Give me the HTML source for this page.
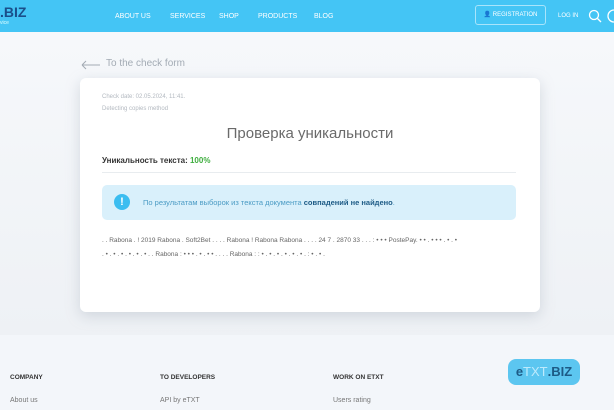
<!DOCTYPE html><html><head><style>
body{margin:0;width:614px;height:410px;overflow:hidden;background:#f3f6fa;font-family:"Liberation Sans","Noto Sans CJK SC",sans-serif;position:relative}
.hd{position:absolute;left:0;top:0;width:614px;height:32px;background:#44c5f5}
.a{position:absolute;color:#fff;font-size:7px;top:13px}
.band{position:absolute;left:0;top:32px;width:614px;height:303px;background:linear-gradient(#f6f8fb,#eef1f5)}
.card{position:absolute;left:80px;top:78px;width:460px;height:234px;background:#fff;border-radius:6px;box-shadow:0 4px 14px rgba(150,160,175,.35)}
.t{position:absolute;white-space:nowrap}
</style></head><body>
<div class="hd">
<div class="t" style="left:0;top:4px;color:#1a4f8a;font-weight:bold;font-size:14px">.BIZ</div>
<div class="t" style="left:0;top:20px;color:#dff;font-size:5px">vice</div>
<span class="a" style="left:115px">ABOUT US</span><span class="a" style="left:170px">SERVICES</span><span class="a" style="left:219px">SHOP</span><span class="a" style="left:258px">PRODUCTS</span><span class="a" style="left:314px">BLOG</span>
<div style="position:absolute;left:475px;top:5px;width:71px;height:20px;border:1px solid #a8e4fb;border-radius:3px;box-sizing:border-box;color:#fff;font-size:6px;line-height:18px;text-align:center">👤 REGISTRATION</div>
<span class="a" style="left:558px;font-size:6px">LOG IN</span>
<svg style="position:absolute;left:588px;top:9px" width="14" height="14"><circle cx="6" cy="6" r="4.5" fill="none" stroke="#fff" stroke-width="1.3"/><path d="M9.5 9.5L13 13" stroke="#fff" stroke-width="1.3"/></svg>
<svg style="position:absolute;left:606px;top:8px" width="10" height="16"><circle cx="8" cy="8" r="6" fill="none" stroke="#fff" stroke-width="1.3"/></svg>
</div>
<div class="band"></div>
<svg style="position:absolute;left:81px;top:60px" width="20" height="10"><path d="M1 5H19M1 5L5 1M1 5L5 9" fill="none" stroke="#a3abb4" stroke-width="1"/></svg>
<div class="t" style="left:106px;top:58px;color:#a3abb4;font-size:10px">To the check form</div>
<div class="card">
<div class="t" style="left:22px;top:16px;color:#b3b9c0;font-size:6px">Check date: 02.05.2024, 11:41.</div>
<div class="t" style="left:22px;top:28px;color:#b3b9c0;font-size:6px">Detecting copies method</div>
<div class="t" style="left:0;width:460px;text-align:center;top:47px;color:#6a6a6a;font-size:15px">Проверка уникальности</div>
<div class="t" style="left:22px;top:78px;color:#333;font-size:8px;font-weight:bold">Уникальность текста: <span style="color:#3fae3f">100%</span></div>
<div style="position:absolute;left:22px;top:94px;width:414px;height:1px;background:#e8ecef"></div>
<div style="position:absolute;left:22px;top:107px;width:414px;height:35px;background:#d9f0fb;border-radius:5px"></div>
<div style="position:absolute;left:34px;top:116px;width:16px;height:16px;border-radius:50%;background:#3bbdf0;color:#fff;font-size:11px;font-weight:bold;text-align:center;line-height:16px">!</div>
<div class="t" style="left:63px;top:120px;color:#4a9bc4;font-size:7.5px">По результатам выборок из текста документа <b style="color:#1d5b86">совпадений не найдено</b>.</div>
<div class="t" style="left:22px;top:159px;color:#666;font-size:6.5px">. . Rabona . ! 2019 Rabona . Soft2Bet . . . . Rabona ! Rabona Rabona . . . . 24 7 . 2870 33 . . . : • • • PostePay. • • . • • • . • . •</div>
<div class="t" style="left:22px;top:173px;color:#666;font-size:6.5px">. • . • . • . • . • . • . . Rabona : • • • . • . • • . . . . Rabona : : • . • . • . • . • . • . : • . • .</div>
</div>
<div class="t" style="left:10px;top:374px;color:#333;font-size:6.5px;font-weight:bold">COMPANY</div>
<div class="t" style="left:160px;top:374px;color:#333;font-size:6.5px;font-weight:bold">TO DEVELOPERS</div>
<div class="t" style="left:333px;top:374px;color:#333;font-size:6.5px;font-weight:bold">WORK ON ETXT</div>
<div class="t" style="left:10px;top:397px;color:#777;font-size:7px">About us</div>
<div class="t" style="left:160px;top:397px;color:#777;font-size:7px">API by eTXT</div>
<div class="t" style="left:333px;top:397px;color:#777;font-size:7px">Users rating</div>
<div style="position:absolute;left:508px;top:359px;width:72px;height:26px;border-radius:8px;background:#5cc6f0;color:#1d5b86;font-size:13px;font-weight:bold;line-height:26px;text-align:center">e<span style="color:#bdeafc;font-weight:normal">TXT</span>.BIZ</div>
</body></html>
